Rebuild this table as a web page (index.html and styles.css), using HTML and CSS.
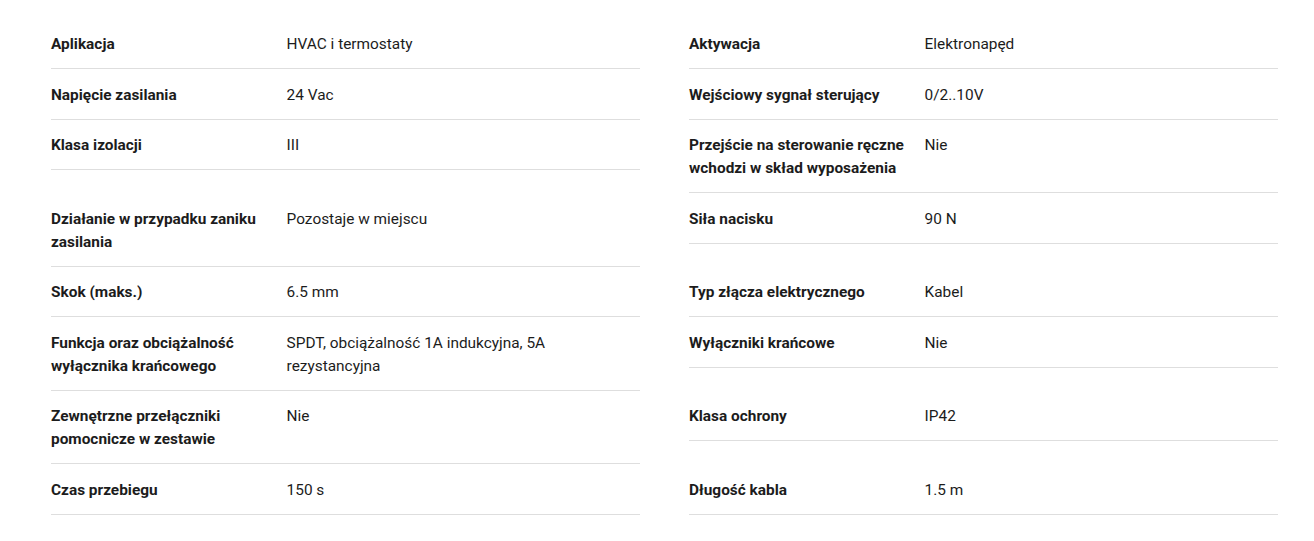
FILE: index.html
```html
<!DOCTYPE html>
<html lang="pl">
<head>
<meta charset="utf-8">
<title>Specyfikacja</title>
<link rel="stylesheet" href="styles.css">
</head>
<body>
<div class="specs">
  <div class="spec"><div class="label">Aplikacja</div><div class="value">HVAC i termostaty</div></div>
  <div class="spec"><div class="label">Aktywacja</div><div class="value">Elektronapęd</div></div>
  <div class="spec"><div class="label">Napięcie zasilania</div><div class="value">24 Vac</div></div>
  <div class="spec"><div class="label">Wejściowy sygnał sterujący</div><div class="value">0/2..10V</div></div>
  <div class="spec"><div class="label">Klasa izolacji</div><div class="value">III</div></div>
  <div class="spec"><div class="label">Przejście na sterowanie ręczne wchodzi w skład wyposażenia</div><div class="value">Nie</div></div>
  <div class="spec"><div class="label">Działanie w przypadku zaniku zasilania</div><div class="value">Pozostaje w miejscu</div></div>
  <div class="spec"><div class="label">Siła nacisku</div><div class="value">90 N</div></div>
  <div class="spec"><div class="label">Skok (maks.)</div><div class="value">6.5 mm</div></div>
  <div class="spec"><div class="label">Typ złącza elektrycznego</div><div class="value">Kabel</div></div>
  <div class="spec"><div class="label">Funkcja oraz obciążalność wyłącznika krańcowego</div><div class="value">SPDT, obciążalność 1A indukcyjna, 5A rezystancyjna</div></div>
  <div class="spec"><div class="label">Wyłączniki krańcowe</div><div class="value">Nie</div></div>
  <div class="spec"><div class="label">Zewnętrzne przełączniki pomocnicze w zestawie</div><div class="value">Nie</div></div>
  <div class="spec"><div class="label">Klasa ochrony</div><div class="value">IP42</div></div>
  <div class="spec"><div class="label">Czas przebiegu</div><div class="value">150 s</div></div>
  <div class="spec"><div class="label">Długość kabla</div><div class="value">1.5 m</div></div>
</div>
</body>
</html>
```
FILE: styles.css
```css
html, body {
  margin: 0;
  padding: 0;
  background: #ffffff;
}

body {
  font-family: Roboto, "Liberation Sans", Arial, sans-serif;
  font-size: 15.4px;
  line-height: 23px;
  color: #1c1c1c;
}

.specs {
  display: grid;
  grid-template-columns: 589px 589px;
  column-gap: 49px;
  align-items: start;
  padding: 18.5px 0 0 51px;
}

.spec {
  display: grid;
  grid-template-columns: 40% 60%;
  padding: 14.5px 0 12px;
  border-bottom: 1px solid #dedede;
}

.label {
  font-weight: 700;
  padding-right: 8px;
}

.value {
  font-weight: 400;
  padding-right: 8px;
}
```
